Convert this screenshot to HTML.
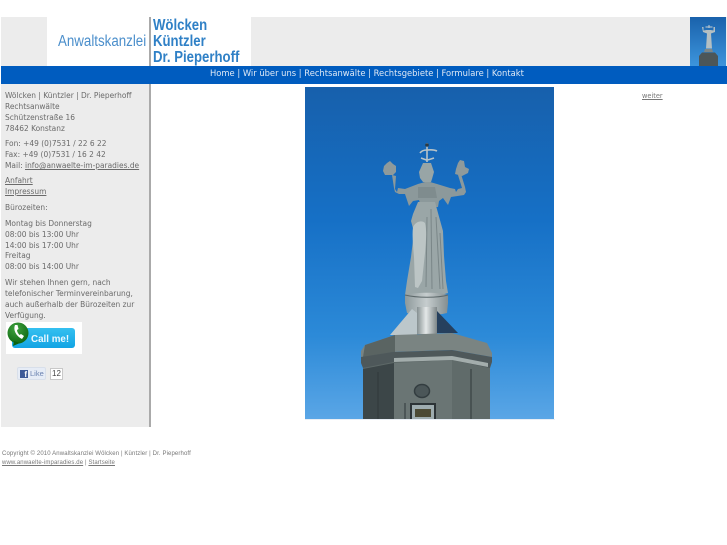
<!DOCTYPE html>
<html><head><meta charset="utf-8"><style>
html,body{margin:0;padding:0;background:#fff;width:727px;height:545px;overflow:hidden}
body{position:relative;font-family:"DejaVu Sans",sans-serif;color:#6a6a6a;font-size:8.2px}
#w{position:absolute;left:0;top:0;width:727px;height:545px;filter:blur(.35px)}
.a{position:absolute;white-space:nowrap;line-height:11px}
.t{transform:scaleX(.91);transform-origin:0 0}
u{text-decoration:underline}
</style></head><body><div id="w">
<div class="a" style="left:1px;top:17px;width:726px;height:49px;background:#ececec"></div>
<div class="a" style="left:47px;top:17px;width:204px;height:49px;background:#fff"></div>
<div class="a" style="left:149px;top:17px;width:1.5px;height:49px;background:#aaa"></div>
<div class="a" style="left:58px;top:34px;font:15.5px/16px 'Liberation Sans',sans-serif;color:#4a8ecb;transform:scaleX(.86);transform-origin:0 0">Anwaltskanzlei</div>
<div class="a" style="left:153px;top:18px;font:bold 15.5px/16px 'Liberation Sans',sans-serif;color:#2f80c6;transform:scaleX(.85);transform-origin:0 0">Wölcken<br>Küntzler<br>Dr. Pieperhoff</div>
<svg class="a" style="left:690px;top:17px" width="36" height="49" viewBox="0 0 36 49">
<defs><linearGradient id="t" x1="0" y1="0" x2="0" y2="1"><stop offset="0" stop-color="#1a62ac"/><stop offset="1" stop-color="#3d95dc"/></linearGradient></defs>
<rect width="36" height="49" fill="url(#t)"/>
<path d="M19 8v3M15.500 10h7" stroke="#c3ccd0" stroke-width="1" fill="none"/>
<path d="M12 10h1.500v3.500l3-.5h4l3 .5V10H25v5l-4 1.500 1 15h-6l1-15-4-1.500z" fill="#b4bfc2"/>
<path d="M15 32h7l1 3h-9z" fill="#7d8788"/>
<path d="M9 39l3-3.500h13l3 3.500v10H9z" fill="#4c5658"/>
</svg>
<div class="a" style="left:1px;top:66px;width:726px;height:18px;background:#005cbf"></div>
<div class="a" style="left:210px;top:68px;font-size:9px;line-height:13px;color:#dfe9f5;transform:scaleX(.929);transform-origin:0 0">Home | Wir über uns | Rechtsanwälte | Rechtsgebiete | Formulare | Kontakt</div>

<div class="a" style="left:1px;top:84px;width:148px;height:343px;background:#ececec;border-right:2px solid #aaa"></div>
<div class="a t" style="left:5px;top:90px">Wölcken | Küntzler | Dr. Pieperhoff</div>
<div class="a t" style="left:5px;top:101px">Rechtsanwälte</div>
<div class="a t" style="left:5px;top:112px">Schützenstraße 16</div>
<div class="a t" style="left:5px;top:123px">78462 Konstanz</div>
<div class="a t" style="left:5px;top:138px">Fon: +49 (0)7531 / 22 6 22</div>
<div class="a t" style="left:5px;top:149px">Fax: +49 (0)7531 / 16 2 42</div>
<div class="a t" style="left:5px;top:160px">Mail: <u>info@anwaelte-im-paradies.de</u></div>
<div class="a t" style="left:5px;top:175px"><u>Anfahrt</u></div>
<div class="a t" style="left:5px;top:186px"><u>Impressum</u></div>
<div class="a t" style="left:5px;top:202px">Bürozeiten:</div>
<div class="a t" style="left:5px;top:218px">Montag bis Donnerstag</div>
<div class="a t" style="left:5px;top:229px">08:00 bis 13:00 Uhr</div>
<div class="a t" style="left:5px;top:240px">14:00 bis 17:00 Uhr</div>
<div class="a t" style="left:5px;top:250px">Freitag</div>
<div class="a t" style="left:5px;top:261px">08:00 bis 14:00 Uhr</div>
<div class="a t" style="left:5px;top:277px">Wir stehen Ihnen gern, nach</div>
<div class="a t" style="left:5px;top:288px">telefonischer Terminvereinbarung,</div>
<div class="a t" style="left:5px;top:299px">auch außerhalb der Bürozeiten zur</div>
<div class="a t" style="left:5px;top:310px">Verfügung.</div>

<svg class="a" style="left:6px;top:322px" width="76" height="32" viewBox="0 0 76 32">
<defs><linearGradient id="b" x1="0" y1="0" x2="0" y2="1"><stop offset="0" stop-color="#35c0f0"/><stop offset="1" stop-color="#12a4e4"/></linearGradient>
<radialGradient id="g" cx=".4" cy=".3" r=".8"><stop offset="0" stop-color="#3fa33f"/><stop offset="1" stop-color="#0c630f"/></radialGradient></defs>
<rect width="76" height="32" fill="#fff"/>
<rect x="6" y="6" width="63" height="20" rx="3" fill="url(#b)"/>
<circle cx="12" cy="11" r="10.500" fill="url(#g)"/>
<path d="M8 19l-1 5 7-3z" fill="#0c630f"/>
<path d="M9 3c-2 5 1 11 7 14l2-3-3-2-1.500 1c-1.500-1.500-2.500-3.500-2.500-5l1.500-1-1-4z" fill="#fff"/>
<text x="25" y="20" font-family="Liberation Sans" font-weight="bold" font-size="9.800" fill="#eaf8ff">Call me!</text>
</svg>

<div class="a" style="left:17px;top:367px;width:27px;height:11px;background:#e6ecf6;border:1px solid #d8dfea;border-radius:2px"></div>
<div class="a" style="left:20px;top:370px;width:8px;height:8px;background:#3b5998;color:#fff;font:bold 8px/9px 'Liberation Sans',sans-serif;text-align:right"><span style="padding-right:1px">f</span></div>
<div class="a" style="left:30px;top:368px;font:7.500px/11px 'Liberation Sans',sans-serif;color:#6b82b0">Like</div>
<div class="a" style="left:50px;top:368px;width:11px;height:10px;background:#fff;border:1px solid #c8c8c8;font:8px/10px 'Liberation Sans',sans-serif;color:#444;text-align:center">12</div>

<svg class="a" style="left:305px;top:87px" width="249" height="332" viewBox="0 0 249 332">
<defs><linearGradient id="s" x1="0" y1="0" x2="0" y2="1"><stop offset="0" stop-color="#1760ac"/><stop offset=".4" stop-color="#1670c6"/><stop offset=".75" stop-color="#2c8ad8"/><stop offset="1" stop-color="#5aa6e6"/></linearGradient>
<linearGradient id="c" x1="0" y1="0" x2="1" y2="0"><stop offset="0" stop-color="#858f91"/><stop offset=".45" stop-color="#e4e8e8"/><stop offset="1" stop-color="#7d8688"/></linearGradient>
<linearGradient id="d" x1="0" y1="0" x2="1" y2="0"><stop offset="0" stop-color="#8d999b"/><stop offset=".5" stop-color="#c6cdce"/><stop offset="1" stop-color="#848e90"/></linearGradient></defs>
<rect width="249" height="332" fill="url(#s)"/>
<path d="M122 56v19M115 66c2-3 5-3 7-3s6-1 10 1M116 71c3 1 5 2 6 2s4-1 7-2" stroke="#b9c4c8" stroke-width="1.600" fill="none"/>
<circle cx="122" cy="58" r="1.800" fill="#2b3a44"/>
<path d="M82 76l3-2 3 3 3 2v6l-3 3h-8l-2-4 1-5z" fill="#8f9a9b"/>
<path d="M153 76l2-3 4 1 1 6 4 2-1 4-6 3-7-2 1-5z" fill="#8f9a9b"/>
<path d="M118 76h8l3 9-2 7-1 3h-8l-3-4-1-6z" fill="#98a5a6"/>
<path d="M87 88l4 1-1 13 2 3 1-4 7 1 13-5 7-2h5l7 2 13 4 5 1 1 3 2-3 4-1-4-13 3-1 4 13 1 5-2 3-13 2-3 8-5-7-4 3-1 6h-17l-2-7-6 1-4 5-4-12-6 0-4-2-1-4z" fill="#8c999b"/>
<path d="M113 100h17l2 11h-19z" fill="#7f8c8e"/>
<path d="M113 115h17l3 11 5 18 1 25 2 25 2 12-21 6-22-4 2-14 4-24 3-25-3-11 2-7z" fill="#9aa6a7"/>
<path d="M126 122l1 80M131 130l4 72M135 146l3 56M122 130l-1 70" stroke="#7a8688" stroke-width="1" fill="none"/>
<path d="M108 140c3-6 9-7 12-4 2 8 1 18 0 30l-3 28-4 7-3-1-1-30c-1-12-2-22-1-30z" fill="#bcc5c5"/>
<path d="M100 208c12-3 33-3 43 0v8l-1 10c-12 3-28 3-40 0l-2-10z" fill="url(#d)"/>
<path d="M100 208c12 3 33 3 43 0" stroke="#5d686a" stroke-width="1" fill="none"/>
<path d="M107 222l-22 26h27v-22z" fill="#bcc7cb"/>
<path d="M132 224l21 22h-21z" fill="#26405e"/>
<rect x="112" y="220" width="20" height="27" fill="url(#c)"/>
<path d="M58 281l32-8 58-2 37 9v52H58z" fill="#5d6867"/>
<path d="M58 282l31-6v56H58z" fill="#3c4648"/>
<path d="M89 276l58-3v59H89z" fill="#6a7574"/>
<path d="M147 273l38 8v51h-38z" fill="#606b6a"/>
<path d="M60 258l30-10 57-2 35 10 5 10v4l-40-7-59 2-32 5 0-6z" fill="#7a8482"/>
<path d="M60 258l30-10v17l-32 5z" fill="#5a6462"/>
<path d="M56 270l32-5 59-2 40 7v5l-2 6-38-8-59 2-30 6-2-5z" fill="#4e585a"/>
<path d="M89 271l58-2 36 7v4l-36-7-58 2z" fill="#a3adac"/>
<path d="M73 285v47M166 282v50M100 316v16" stroke="#2f383a" stroke-width="1" fill="none"/>
<ellipse cx="117" cy="304" rx="7.500" ry="6.500" fill="#4b5658" stroke="#333d40" stroke-width="1.500"/>
<rect x="105" y="316" width="26" height="16" fill="#2c3336"/>
<rect x="107" y="318" width="22" height="14" fill="#9eacaf"/>
<rect x="110" y="322" width="16" height="8" fill="#4c4a34"/>
</svg>
<div class="a" style="left:305px;top:419px;width:250px;height:1px;background:#e8eef5"></div>
<div class="a" style="left:642px;top:91px;font-size:6.600px;line-height:10px;color:#777"><u>weiter</u></div>
<div class="a" style="left:2px;top:449px;font:6px/10px 'Liberation Sans',sans-serif;letter-spacing:.12px;color:#777">Copyright © 2010 Anwaltskanzlei Wölcken | Küntzler | Dr. Pieperhoff</div>
<div class="a" style="left:2px;top:458px;font:6px/10px 'Liberation Sans',sans-serif;letter-spacing:.12px;color:#777"><u>www.anwaelte-imparadies.de</u> | <u>Startseite</u></div>
</div></body></html>
